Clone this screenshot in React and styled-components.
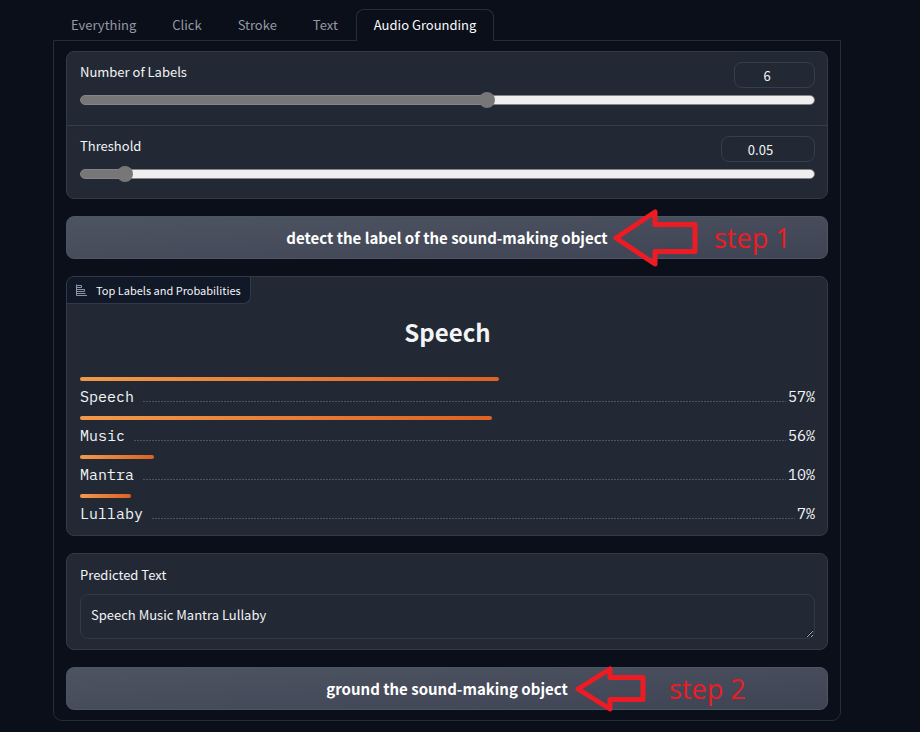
import React, { useState } from "react";
import styled, { createGlobalStyle } from "styled-components";

const sans = `"Source Sans Pro", "Noto Sans CJK SC", "Open Sans", sans-serif`;
const mono = `"IBM Plex Mono", "Liberation Mono", monospace`;

const GlobalStyle = createGlobalStyle`
  *, *::before, *::after { box-sizing: border-box; }
  body {
    margin: 0;
    background: #0b0f19;
    color: #f3f4f6;
    color-scheme: dark;
    font-family: ${sans};
    font-size: 13px;
    line-height: 20px;
  }
`;

const Page = styled.main`
  padding: 9px 79px 10px 53px;
`;

const TabBar = styled.div`
  display: flex;
  align-items: stretch;
`;

const Tab = styled.button`
  position: relative;
  height: 32px;
  margin-bottom: -1px;
  padding: 0 17px 2px;
  border: 1px solid ${(p) => (p.$active ? "#272c3a" : "transparent")};
  border-bottom: 0;
  border-radius: 8px 8px 0 0;
  background: ${(p) => (p.$active ? "#0b0f19" : "transparent")};
  color: ${(p) => (p.$active ? "#f9fafb" : "#9299a6")};
  font: inherit;
  white-space: nowrap;
  cursor: pointer;
`;

const Panel = styled.section`
  display: flex;
  flex-direction: column;
  gap: 17px;
  padding: 10px 12px;
  border: 1px solid #272c3a;
  border-radius: 0 0 9px 9px;
`;

const Card = styled.div`
  border: 1px solid #323a48;
  border-radius: 8px;
  background: #222935;
  overflow: hidden;
`;

const SliderBlock = styled.div`
  padding: 10px 12px 20px 13px;
  & + & {
    padding-bottom: 19px;
    border-top: 1px solid #363e4c;
  }
`;

const SliderHead = styled.div`
  display: flex;
  justify-content: space-between;
  align-items: flex-start;
  margin-bottom: 7px;
`;

const NumberInput = styled.input`
  width: ${(p) => (p.$wide ? 94 : 81)}px;
  height: 26px;
  padding: 0 8px;
  border: 1px solid #363e4c;
  border-radius: 8px;
  background: transparent;
  color: #f3f4f6;
  font: inherit;
  text-align: center;
`;

const Range = styled.input`
  display: block;
  appearance: none;
  width: 100%;
  height: 10px;
  margin: 0;
  border: 1px solid #848487;
  border-radius: 5px;
  background: linear-gradient(
    to right,
    #777 calc(8px + (100% - 16px) * var(--fill)),
    #efefef calc(8px + (100% - 16px) * var(--fill))
  );
  &::-webkit-slider-thumb {
    appearance: none;
    width: 16px;
    height: 16px;
    border-radius: 50%;
    background: #777;
  }
`;

const ActionButton = styled.button`
  display: block;
  width: 100%;
  height: 43px;
  padding: 0 0 1px;
  border: 1px solid #4b5563;
  border-radius: 8px;
  background: linear-gradient(to bottom right, #4d5461, #3f4454);
  color: #fff;
  font-family: inherit;
  font-size: 15px;
  font-weight: 600;
  cursor: pointer;
`;

const ActionRow = styled.div`
  position: relative;
`;

const Annotation = styled.div`
  position: absolute;
  top: 50%;
  left: calc(50% + ${(p) => p.$offset}px);
  display: flex;
  align-items: center;
  gap: ${(p) => p.$gap}px;
  transform: translateY(-50%);
  color: #ed1c24;
  font-family: "Segoe UI", "Open Sans", sans-serif;
  font-size: 27px;
  line-height: 36px;
  white-space: nowrap;
  pointer-events: none;
`;

const BlockLabel = styled.div`
  display: inline-flex;
  align-items: center;
  gap: 9px;
  height: 27px;
  padding: 0 9px;
  border-right: 1px solid #323a48;
  border-bottom: 1px solid #323a48;
  border-radius: 0 0 8px 0;
  background: #111827;
  font-size: 11px;
`;

const Results = styled.div`
  padding: 10px 12px 10px 13px;
`;

const Headline = styled.h2`
  margin: 0 0 27px;
  font-size: 24px;
  line-height: 36px;
  font-weight: 600;
  text-align: center;
`;

const Result = styled.div`
  & + & {
    margin-top: 8px;
  }
`;

const Bar = styled.div`
  height: 4px;
  border-radius: 2px;
  background: linear-gradient(to right, #f19a4a, #dd6223);
`;

const ResultLine = styled.div`
  display: flex;
  align-items: center;
  margin-top: 5px;
  height: 22px;
  font-family: ${mono};
  font-size: 15px;
`;

const Leader = styled.span`
  flex: 1;
  height: 1px;
  margin: 8px 2px 0 9px;
  background: repeating-linear-gradient(to right, #4b5563 0 2px, transparent 2px 3px);
`;

const TextCard = styled(Card)`
  padding: 11px 12px 10px 13px;
`;

const FieldLabel = styled.label`
  display: block;
`;

const TextArea = styled.textarea`
  display: block;
  width: 100%;
  height: 45px;
  margin-top: 9px;
  padding: 10px;
  border: 1px solid #323a48;
  border-radius: 8px;
  background: transparent;
  color: #f3f4f6;
  font: inherit;
  resize: vertical;
`;

function SliderField({ id, label, min, max, step, initial, wide }) {
  const [value, setValue] = useState(initial);
  const update = (e) => setValue(e.target.value);
  const fill = (value - min) / (max - min);
  const shared = { min, max, step, value, onChange: update };
  return (
    <SliderBlock>
      <SliderHead>
        <FieldLabel htmlFor={id}>{label}</FieldLabel>
        <NumberInput type="number" id={id} $wide={wide} {...shared} />
      </SliderHead>
      <Range type="range" aria-label={label} style={{ "--fill": fill }} {...shared} />
    </SliderBlock>
  );
}

function ChartIcon() {
  return (
    <svg width="11" height="12" viewBox="0 0 11 12" fill="none" stroke="#9ca3af" aria-hidden="true">
      <path d="M0.5 0.500V11.500H11M0.500 1.500H5.500V3.500H0.500M0.500 5.500H8.500V7.500H0.500M0.500 9.500H9.500" strokeWidth="0.9" />
    </svg>
  );
}

function LargeArrow() {
  return (
    <svg width="86" height="60" viewBox="0 0 86 60" fill="none" stroke="#ed1c24" strokeWidth="5" aria-hidden="true">
      <path d="M3 30L42 4V16.500H82V43.500H42V56Z" strokeLinejoin="round" />
    </svg>
  );
}

function SmallArrow() {
  return (
    <svg width="72" height="48" viewBox="0 0 72 48" fill="none" stroke="#ed1c24" strokeWidth="5" aria-hidden="true">
      <path d="M3 24L35 4V12.500H68V34.500H35V44Z" strokeLinejoin="round" />
    </svg>
  );
}

const tabs = ["Everything", "Click", "Stroke", "Text", "Audio Grounding"];

const results = [
  { name: "Speech", percent: 57 },
  { name: "Music", percent: 56 },
  { name: "Mantra", percent: 10 },
  { name: "Lullaby", percent: 7 },
];

export default function App() {
  const [active, setActive] = useState("Audio Grounding");
  return (
    <Page>
      <GlobalStyle />
      <TabBar role="tablist">
        {tabs.map((name) => (
          <Tab
            key={name}
            role="tab"
            aria-selected={name === active}
            $active={name === active}
            onClick={() => setActive(name)}
          >
            {name}
          </Tab>
        ))}
      </TabBar>
      <Panel role="tabpanel">
        <Card>
          <SliderField id="labels" label="Number of Labels" min={1} max={10} step={1} initial="6" />
          <SliderField id="threshold" label="Threshold" min={0} max={1} step={0.01} initial="0.05" wide />
        </Card>
        <ActionRow>
          <ActionButton type="button">detect the label of the sound-making object</ActionButton>
          <Annotation $offset={166} $gap={15}>
            <LargeArrow />
            step 1
          </Annotation>
        </ActionRow>
        <Card>
          <BlockLabel>
            <ChartIcon />
            Top Labels and Probabilities
          </BlockLabel>
          <Results>
            <Headline>Speech</Headline>
            {results.map(({ name, percent }) => (
              <Result key={name}>
                <Bar style={{ width: `${percent}%` }} />
                <ResultLine>
                  <span>{name}</span>
                  <Leader />
                  <span>{percent}%</span>
                </ResultLine>
              </Result>
            ))}
          </Results>
        </Card>
        <TextCard>
          <FieldLabel htmlFor="predicted">Predicted Text</FieldLabel>
          <TextArea id="predicted" rows={1} defaultValue="Speech Music Mantra Lullaby" />
        </TextCard>
        <ActionRow>
          <ActionButton type="button">ground the sound-making object</ActionButton>
          <Annotation $offset={128} $gap={22}>
            <SmallArrow />
            step 2
          </Annotation>
        </ActionRow>
      </Panel>
    </Page>
  );
}
